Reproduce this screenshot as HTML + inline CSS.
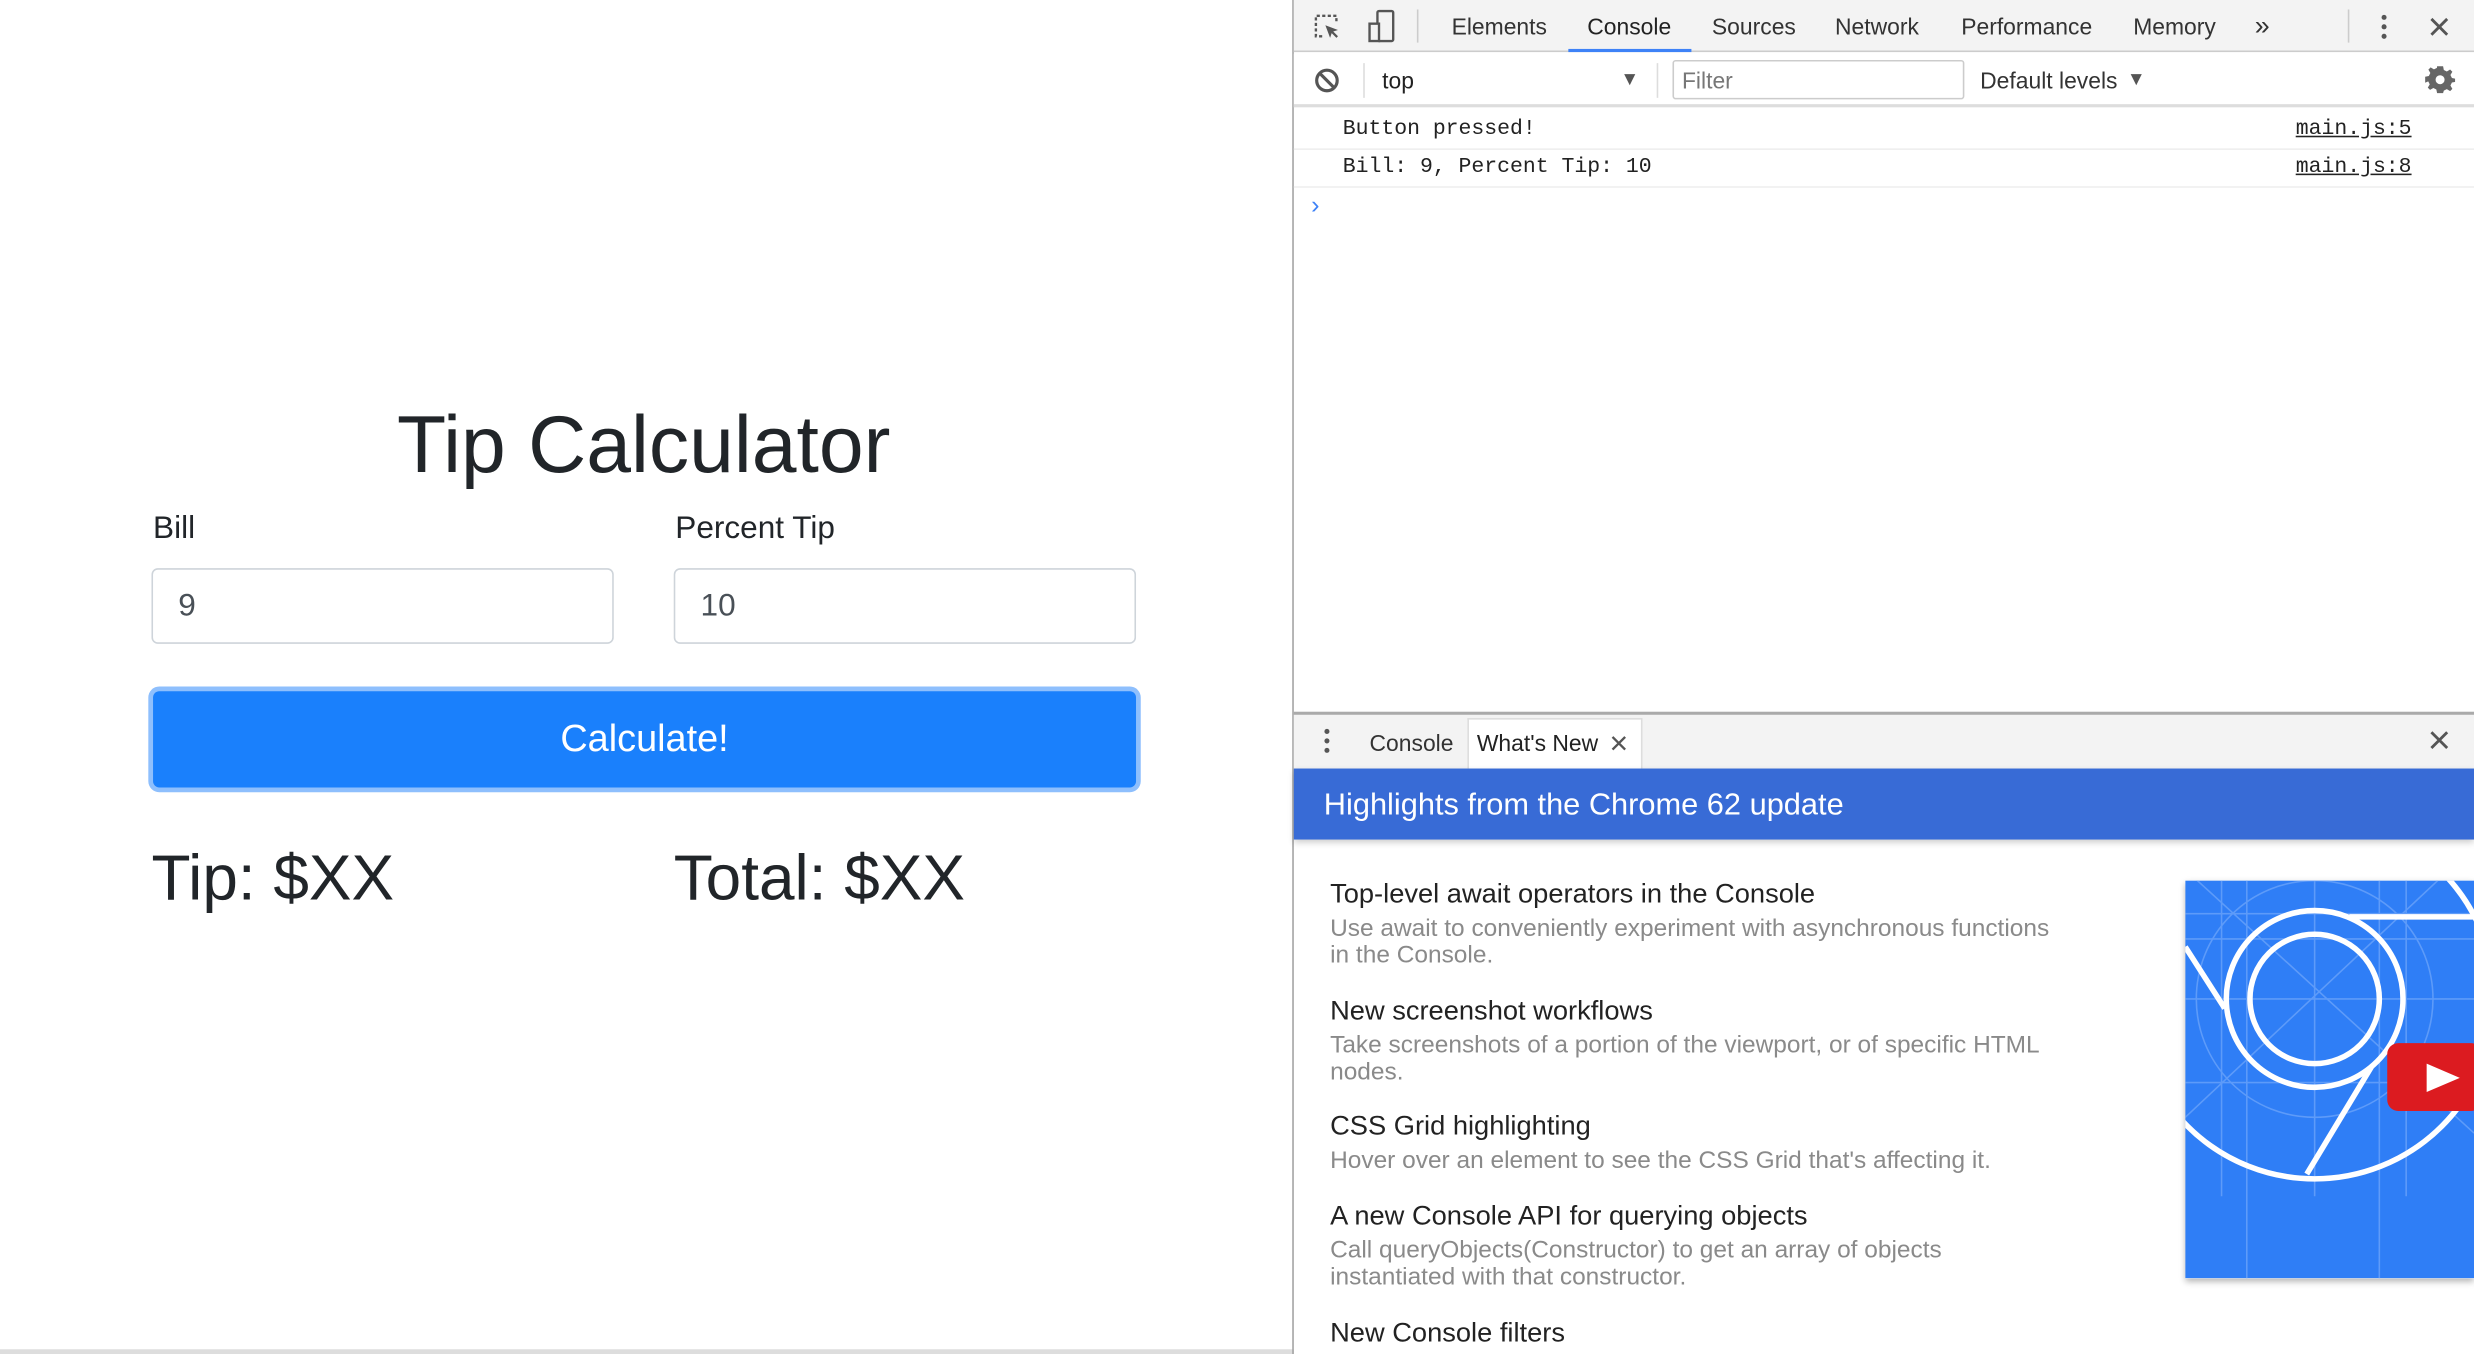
<!DOCTYPE html>
<html><head><meta charset="utf-8"><style>
*{box-sizing:border-box;margin:0;padding:0}
html,body{width:2474px;height:1354px;overflow:hidden;background:#fff}
#w{width:1568px;height:858px;transform:scale(1.57781,1.57809);transform-origin:0 0;position:relative;font-family:"Liberation Sans",sans-serif}
.a{position:absolute;white-space:nowrap}
.dt{font-size:14.5px;color:#333}
.mono{font-family:"Liberation Mono",monospace;font-size:13.6px;color:#222}
.lnk{font-family:"Liberation Mono",monospace;font-size:13.6px;color:#222;text-decoration:underline}
.t{font-size:17.3px;color:#222}
.d{font-size:15.5px;color:#8a8a8a;line-height:17px}
</style></head><body><div id="w">
<div class="a" style="left:0;top:252px;width:816px;text-align:center;font-size:51px;color:#212529">Tip Calculator</div>
<div class="a" style="left:97px;top:324px;font-size:20px;color:#212529">Bill</div>
<div class="a" style="left:428px;top:324px;font-size:20px;color:#212529">Percent Tip</div>
<div class="a" style="left:96px;top:360px;width:293px;height:48px;border:1px solid #ced4da;border-radius:4px"></div>
<div class="a" style="left:427px;top:360px;width:293px;height:48px;border:1px solid #ced4da;border-radius:4px"></div>
<div class="a" style="left:113px;top:373px;font-size:20px;color:#495057">9</div>
<div class="a" style="left:444px;top:373px;font-size:20px;color:#495057">10</div>
<div class="a" style="left:94px;top:435px;width:629px;height:67px;border-radius:7px;background:#8ebffd"></div>
<div class="a" style="left:97px;top:438px;width:623px;height:61px;border-radius:4px;background:#1a80fc;color:#fff;font-size:24px;text-align:center;line-height:62px">Calculate!</div>
<div class="a" style="left:96px;top:533px;font-size:40.5px;color:#212529">Tip: $XX</div>
<div class="a" style="left:427px;top:533px;font-size:40.5px;color:#212529">Total: $XX</div>
<div class="a" style="left:0;top:855px;width:820px;height:3px;background:#ddd"></div>

<div class="a" style="left:819px;top:0;width:1px;height:858px;background:#a3a3a3"></div>
<div class="a" style="left:820px;top:0;width:748px;height:33px;background:#f3f3f3;border-bottom:1px solid #ccc"></div>
<svg class="a" style="left:832px;top:8px" width="18" height="18" viewBox="0 0 18 18"><path d="M6 15H2V2h13v4" fill="none" stroke="#555" stroke-width="1.5" stroke-dasharray="2 1.5"/><path d="M8 8l8 3-3 1 3 3-1 1-3-3-1 3z" fill="#555"/></svg>
<svg class="a" style="left:866px;top:6px" width="20" height="22" viewBox="0 0 20 22"><rect x="7" y="1" width="10" height="19" rx="1" fill="none" stroke="#555" stroke-width="1.5"/><rect x="2" y="9" width="6" height="11" fill="#f3f3f3" stroke="#555" stroke-width="1.5"/></svg>
<div class="a" style="left:898px;top:6px;width:1px;height:21px;background:#ccc"></div>
<div class="a dt" style="left:920px;top:10px">Elements</div>
<div class="a dt" style="left:1006px;top:10px;color:#222">Console</div>
<div class="a" style="left:994px;top:31px;width:78px;height:2px;background:#3e82f7"></div>
<div class="a dt" style="left:1085px;top:10px">Sources</div>
<div class="a dt" style="left:1163px;top:10px">Network</div>
<div class="a dt" style="left:1243px;top:10px">Performance</div>
<div class="a dt" style="left:1352px;top:10px">Memory</div>
<div class="a dt" style="left:1429px;top:7px;font-size:17px">»</div>
<div class="a" style="left:1488px;top:6px;width:1px;height:21px;background:#ccc"></div>
<svg class="a" style="left:1508px;top:8px" width="6" height="18"><circle cx="3" cy="3" r="1.6" fill="#555"/><circle cx="3" cy="9" r="1.6" fill="#555"/><circle cx="3" cy="15" r="1.6" fill="#555"/></svg>
<svg class="a" style="left:1539px;top:10px" width="14" height="14"><path d="M2 2l10 10M12 2L2 12" stroke="#555" stroke-width="1.8"/></svg>

<div class="a" style="left:820px;top:34px;width:748px;height:34px;background:#fff;border-bottom:2px solid #ddd"></div>
<svg class="a" style="left:832px;top:42px" width="18" height="18"><circle cx="9" cy="9" r="6.5" fill="none" stroke="#555" stroke-width="2"/><path d="M4.5 4.5l9 9" stroke="#555" stroke-width="2"/></svg>
<div class="a" style="left:864px;top:40px;width:1px;height:22px;background:#ddd"></div>
<div class="a dt" style="left:876px;top:44px;color:#222">top</div>
<div class="a" style="left:1027px;top:43px;font-size:12px;color:#555">▼</div>
<div class="a" style="left:1050px;top:40px;width:1px;height:22px;background:#ddd"></div>
<div class="a" style="left:1060px;top:38px;width:185px;height:25px;border:1px solid #ccc;border-radius:2px"></div>
<div class="a dt" style="left:1066px;top:44px;color:#777">Filter</div>
<div class="a dt" style="left:1255px;top:44px">Default levels</div>
<div class="a" style="left:1348px;top:43px;font-size:12px;color:#555">▼</div>
<svg class="a" style="left:1537px;top:41px" width="19" height="19" viewBox="0 0 20 20"><path d="M10 1l2 0 .5 2.5 2 1 2.2-1.3 1.5 1.5-1.3 2.2 1 2 2.5.5v2l-2.5.5-1 2 1.3 2.2-1.5 1.5-2.2-1.3-2 1L12 19H8l-.5-2.5-2-1-2.2 1.3-1.5-1.5 1.3-2.2-1-2L0 12v-4l2.5-.5 1-2L2.2 3.3 3.7 1.8l2.2 1.3 2-1L8 1z" fill="#666"/><circle cx="10" cy="10" r="3" fill="#fff"/></svg>

<div class="a mono" style="left:851px;top:75px">Button pressed!</div>
<div class="a lnk" style="left:1455px;top:75px">main.js:5</div>
<div class="a" style="left:820px;top:94px;width:748px;height:1px;background:#eee"></div>
<div class="a mono" style="left:851px;top:99px">Bill: 9, Percent Tip: 10</div>
<div class="a lnk" style="left:1455px;top:99px">main.js:8</div>
<div class="a" style="left:820px;top:118px;width:748px;height:1px;background:#eee"></div>
<div class="a" style="left:831px;top:122px;font-size:16px;color:#3e82f7">›</div>

<div class="a" style="left:820px;top:451px;width:748px;height:2px;background:#aaa"></div>
<div class="a" style="left:820px;top:453px;width:748px;height:34px;background:#f3f3f3"></div>
<svg class="a" style="left:838px;top:461px" width="6" height="18"><circle cx="3" cy="2.5" r="1.6" fill="#555"/><circle cx="3" cy="8.5" r="1.6" fill="#555"/><circle cx="3" cy="14.5" r="1.6" fill="#555"/></svg>
<div class="a dt" style="left:868px;top:464px">Console</div>
<div class="a" style="left:930px;top:455px;width:111px;height:32px;background:#fff;border:1px solid #ddd;border-bottom:none"></div>
<div class="a dt" style="left:936px;top:464px;color:#222">What's New</div>
<svg class="a" style="left:1021px;top:466px" width="10" height="10"><path d="M1 1l8 8M9 1L1 9" stroke="#555" stroke-width="1.5"/></svg>
<svg class="a" style="left:1539px;top:462px" width="14" height="14"><path d="M2 2l10 10M12 2L2 12" stroke="#555" stroke-width="1.8"/></svg>
<div class="a" style="left:820px;top:487px;width:748px;height:45px;background:#386bd6;box-shadow:0 2px 4px rgba(0,0,0,.2)"></div>
<div class="a" style="left:839px;top:499px;font-size:19.5px;color:#fff">Highlights from the Chrome 62 update</div>

<div class="a t" style="left:843px;top:556px">Top-level await operators in the Console</div>
<div class="a d" style="left:843px;top:580px">Use await to conveniently experiment with asynchronous functions<br>in the Console.</div>
<div class="a t" style="left:843px;top:630px">New screenshot workflows</div>
<div class="a d" style="left:843px;top:654px">Take screenshots of a portion of the viewport, or of specific HTML<br>nodes.</div>
<div class="a t" style="left:843px;top:703px">CSS Grid highlighting</div>
<div class="a d" style="left:843px;top:727px">Hover over an element to see the CSS Grid that's affecting it.</div>
<div class="a t" style="left:843px;top:760px">A new Console API for querying objects</div>
<div class="a d" style="left:843px;top:784px">Call queryObjects(Constructor) to get an array of objects<br>instantiated with that constructor.</div>
<div class="a t" style="left:843px;top:834px">New Console filters</div>

<svg class="a" style="left:1385px;top:558px;box-shadow:0 2px 4px rgba(0,0,0,.3)" width="183" height="252" viewBox="0 0 183 252">
<rect width="183" height="252" fill="#2f7ef6"/>
<g stroke="#6aa3fa" stroke-width="1" fill="none" opacity=".8">
<path d="M23 0V200M39 0V252M82 0V200M123 0V252M140 0V200M0 21H183M0 37H183M0 75H183M0 128H183"/>
<path d="M0 -7L183 160M0 150L160 0"/>
<circle cx="82" cy="75" r="75"/>
</g>
<g stroke="#fff" stroke-width="3.5" fill="none">
<circle cx="82" cy="75" r="41"/>
<circle cx="82" cy="75" r="56"/>
<circle cx="82" cy="75" r="114"/>
<path d="M0 42L25 81M104 23H183M118 118L77 186"/>
</g>
<rect x="128" y="103" width="60" height="43" rx="7" fill="#dc1b20"/>
<path d="M153 116l21 9-21 9z" fill="#fff"/>
</svg>
</div></body></html>
